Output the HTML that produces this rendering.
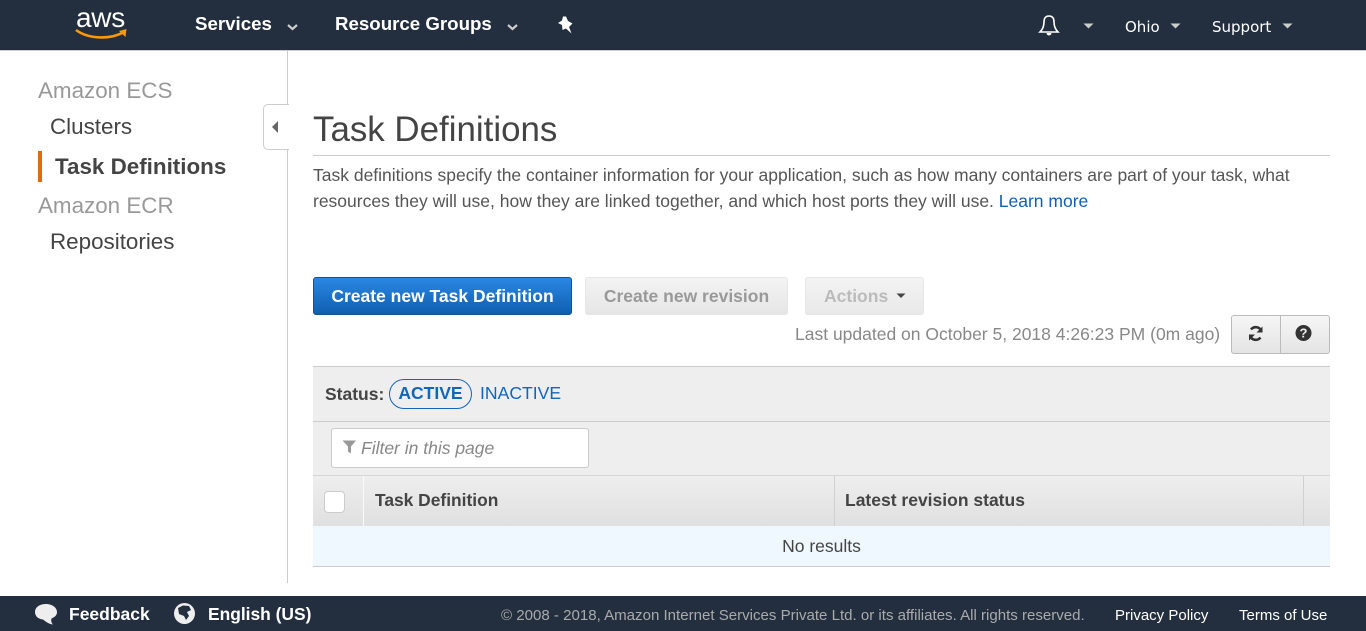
<!DOCTYPE html>
<html><head><meta charset="utf-8"><style>
html,body{margin:0;padding:0;width:1366px;height:631px;overflow:hidden;background:#fff}
body{font-family:"Liberation Sans",sans-serif;position:relative;color:#444}
.a{position:absolute;white-space:nowrap}
.t{line-height:20px}
a{color:inherit;text-decoration:none}
</style></head><body>
<div class="a" style="left:0;top:0;width:1366px;height:50px;background:#232f3e;border-bottom:1px solid #ccc"></div>
<div class="a" style="left:76px;top:3px;font-size:28px;line-height:30px;color:#fff;letter-spacing:-0.3px">aws</div>
<svg class="a" style="left:62px;top:26px" width="70" height="16" viewBox="0 0 70 16"><path d="M14 4 C26 13 48 14 62 6" fill="none" stroke="#f90" stroke-width="2.6"/><path d="M57 5 L64.500 3 L63.500 11 Z" fill="#f90"/></svg>
<div class="a t" style="left:195px;top:14px;font-size:18.700px;font-weight:bold;color:#fff">Services</div>
<svg class="a" style="left:287px;top:23px" width="11" height="8"><path d="M1 2 L5.500 6 L10 2" fill="none" stroke="#ccc" stroke-width="2.200"/></svg>
<div class="a t" style="left:335px;top:14px;font-size:18.700px;font-weight:bold;color:#fff">Resource Groups</div>
<svg class="a" style="left:507px;top:23px" width="11" height="8"><path d="M1 2 L5.500 6 L10 2" fill="none" stroke="#ccc" stroke-width="2.200"/></svg>
<svg class="a" style="left:557px;top:16px" width="18" height="19" viewBox="0 0 18 19"><path d="M6 0.500 L9 0.500 L11 5 L15.500 7.500 L12 11 L14.500 17.500 L9 12.500 L5.500 14 L5 9 L1 7 L5 4.500 Z" fill="#fff"/></svg>
<svg class="a" style="left:1038px;top:14px" width="22" height="23" viewBox="0 0 22 23"><path d="M11 2 C7 2 6 5 6 8 C6 12 5 15 2 18 L20 18 C17 15 16 12 16 8 C16 5 15 2 11 2 Z" fill="none" stroke="#fff" stroke-width="1.600"/><path d="M8.500 19 A2.500 2.500 0 0 0 13.500 19 Z" fill="#fff"/></svg>
<svg class="a" style="left:1083px;top:23px" width="11" height="7"><path d="M0.500 0.500 L10.500 0.500 L5.500 5.500 Z" fill="#ccc"/></svg>
<div class="a t" style="left:1125px;top:17px;font-size:15px;font-family:'DejaVu Sans',sans-serif;color:#fff">Ohio</div>
<svg class="a" style="left:1170px;top:23px" width="11" height="7"><path d="M0.500 0.500 L10.500 0.500 L5.500 5.500 Z" fill="#ccc"/></svg>
<div class="a t" style="left:1212px;top:17px;font-size:15px;font-family:'DejaVu Sans',sans-serif;color:#fff">Support</div>
<svg class="a" style="left:1282px;top:23px" width="11" height="7"><path d="M0.500 0.500 L10.500 0.500 L5.500 5.500 Z" fill="#ccc"/></svg>

<div class="a" style="left:287px;top:51px;width:1px;height:532px;background:#ccc"></div>
<div class="a t" style="left:38px;top:81px;font-size:22.400px;line-height:20px;color:#999">Amazon ECS</div>
<div class="a t" style="left:50px;top:117px;font-size:22.400px;color:#444">Clusters</div>
<div class="a" style="left:38px;top:151px;width:4px;height:31px;background:#dd6b10"></div>
<div class="a t" style="left:55px;top:157px;font-size:22.400px;font-weight:bold;color:#444">Task Definitions</div>
<div class="a t" style="left:38px;top:196px;font-size:22.400px;color:#999">Amazon ECR</div>
<div class="a t" style="left:50px;top:232px;font-size:22.400px;color:#444">Repositories</div>
<div class="a" style="left:263px;top:104px;width:25px;height:44px;background:#fff;border:1px solid #ccc;border-right:none;border-radius:5px 0 0 5px"></div>
<svg class="a" style="left:271px;top:120px" width="8" height="14"><path d="M7 1 L7 13 L1 7 Z" fill="#666"/></svg>

<div class="a t" style="left:313px;top:120px;font-size:34.900px;color:#444">Task Definitions</div>
<div class="a" style="left:313px;top:155px;width:1017px;height:1px;background:#ccc"></div>
<div class="a" style="left:313px;top:162px;width:1017px;font-size:17.500px;line-height:26px;color:#555">Task definitions specify the container information for your application, such as how many containers are part of your task, what<br>resources they will use, how they are linked together, and which host ports they will use. <a style="color:#0f5fb5">Learn more</a></div>

<div class="a t" style="left:313px;top:277px;width:257px;height:36px;line-height:36px;text-align:center;background:linear-gradient(#2a87e4,#0f5fb0);border:1px solid #15508f;border-radius:3px;color:#fff;font-size:17.500px;font-weight:bold">Create new Task Definition</div>
<div class="a t" style="left:585px;top:277px;width:201px;height:36px;line-height:36px;text-align:center;background:linear-gradient(#f3f3f3,#e6e6e6);border:1px solid #e6e6e6;border-radius:3px;color:#999;font-size:17.500px;font-weight:bold">Create new revision</div>
<div class="a t" style="left:805px;top:277px;width:117px;height:36px;line-height:36px;background:linear-gradient(#f3f3f3,#e9e9e9);border:1px solid #e6e6e6;border-radius:3px;color:#bbb;font-size:17.500px;font-weight:bold"><span style="position:absolute;left:18px">Actions</span></div>
<svg class="a" style="left:896px;top:293px" width="10" height="6"><path d="M0.500 0.500 L9.500 0.500 L5 5 Z" fill="#444"/></svg>

<div class="a t" style="left:795px;top:324px;font-size:17.500px;color:#888">Last updated on October 5, 2018 4:26:23 PM (0m ago)</div>
<div class="a" style="left:1231px;top:315px;width:97px;height:37px;background:linear-gradient(#f6f6f6,#e4e4e4);border:1px solid #bbb;border-radius:3px"></div>
<div class="a" style="left:1280px;top:316px;width:1px;height:37px;background:#bbb"></div>
<svg class="a" style="left:1247px;top:325px" width="18" height="17" viewBox="0 0 18 17"><path d="M14.500 6.500 A6 6 0 0 0 4 4.500 M3 10.500 A6 6 0 0 0 13.500 12.500" fill="none" stroke="#333" stroke-width="2.600"/><path d="M15.500 1.500 L15.500 7.500 L9.500 7.500 Z M2 15.500 L2 9.500 L8 9.500 Z" fill="#333"/></svg>
<svg class="a" style="left:1295px;top:325px" width="17" height="17" viewBox="0 0 17 17"><circle cx="8.500" cy="8" r="8" fill="#333"/><text x="8.500" y="12.700" text-anchor="middle" font-family="Liberation Sans" font-weight="bold" font-size="13" fill="#eee">?</text></svg>

<div class="a" style="left:313px;top:366px;width:1017px;height:109px;background:#eee"></div>
<div class="a" style="left:313px;top:366px;width:1017px;height:1px;background:#ccc"></div>
<div class="a" style="left:313px;top:421px;width:1017px;height:1px;background:#ccc"></div>
<div class="a t" style="left:325px;top:384px;font-size:17.500px;font-weight:bold;color:#444">Status:</div>
<div class="a t" style="left:389px;top:379px;width:81px;height:28px;line-height:27px;border:1px solid #1166bb;border-radius:15px;text-align:center;font-size:17.500px;font-weight:bold;color:#1166bb">ACTIVE</div>
<div class="a t" style="left:480px;top:383px;font-size:17.600px;color:#1166bb">INACTIVE</div>
<div class="a" style="left:331px;top:428px;width:256px;height:38px;background:#fff;border:1px solid #ccc;border-radius:3px"></div>
<svg class="a" style="left:342px;top:440px" width="15" height="14"><path d="M0.500 0.500 L14 0.500 L9 6.500 L9 13.500 L6 11.500 L6 6.500 Z" fill="#999"/></svg>
<div class="a t" style="left:361px;top:438px;font-size:17.500px;font-style:italic;color:#888">Filter in this page</div>

<div class="a" style="left:313px;top:475px;width:1017px;height:51px;background:linear-gradient(#eee,#e0e0e0);border-top:1px solid #d5d5d5;box-sizing:border-box"></div>
<div class="a" style="left:363px;top:476px;width:1px;height:50px;background:#fafafa"></div>
<div class="a" style="left:834px;top:476px;width:1px;height:50px;background:#d0d0d0"></div>
<div class="a" style="left:1303px;top:476px;width:1px;height:50px;background:#d0d0d0"></div>
<div class="a" style="left:324px;top:491px;width:19px;height:20px;background:#fff;border:1px solid #ccc;border-radius:4px"></div>
<div class="a t" style="left:375px;top:490px;font-size:17.400px;font-weight:bold;color:#444">Task Definition</div>
<div class="a t" style="left:845px;top:490px;font-size:17.500px;font-weight:bold;color:#444">Latest revision status</div>
<div class="a" style="left:313px;top:526px;width:1017px;height:40px;background:#f0f8ff"></div>
<div class="a" style="left:313px;top:566px;width:1017px;height:1px;background:#ccc"></div>
<div class="a t" style="left:313px;top:536px;width:1017px;text-align:center;font-size:17.500px;color:#444">No results</div>

<div class="a" style="left:0;top:596px;width:1366px;height:35px;background:#232f3e"></div>
<svg class="a" style="left:34px;top:603px" width="24" height="24" viewBox="0 0 24 24"><path d="M12 1 C5 1 1 4.500 1 9 C1 13 4 16 9 16.500 C12 19 15 21 19 21.500 C17 19.500 17 17.500 17.500 15.500 C21 14 23 12 23 9 C23 4.500 18 1 12 1 Z" fill="#eee"/></svg>
<div class="a t" style="left:69px;top:604px;font-size:17.500px;font-weight:bold;color:#fff">Feedback</div>
<svg class="a" style="left:174px;top:603px" width="22" height="22" viewBox="0 0 22 22"><circle cx="10.500" cy="10.500" r="10.500" fill="#eee"/><path d="M4 5 L9 2.500 L15 3 L17 7 L13 9 L15 13 L12 17 L10 13 L5 11 Z" fill="#232f3e"/></svg>
<div class="a t" style="left:208px;top:604px;font-size:17.400px;font-weight:bold;color:#fff">English (US)</div>
<div class="a t" style="left:501px;top:606px;font-size:15.060px;color:#aaa">© 2008 - 2018, Amazon Internet Services Private Ltd. or its affiliates. All rights reserved.</div>
<div class="a t" style="left:1115px;top:606px;font-size:15px;color:#fff">Privacy Policy</div>
<div class="a t" style="left:1239px;top:606px;font-size:15px;color:#fff">Terms of Use</div>
</body></html>
